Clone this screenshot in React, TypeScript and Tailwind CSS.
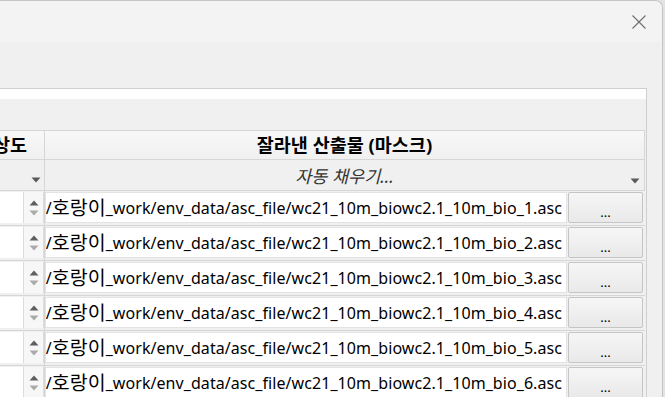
import React from "react";

const FONT = { fontFamily: '"Noto Sans", "Noto Sans CJK KR", sans-serif' };

function DownTri({ className = "" }: { className?: string }) {
  return (
    <svg width="10" height="6" viewBox="0 0 10 6" className={className}>
      <path d="M0.5 0.5 L9.5 0.5 L5 5.5 Z" fill="#5a5a5a" />
    </svg>
  );
}

function Spin() {
  return (
    <div className="flex h-full w-[44px] shrink-0">
      <div className="h-full w-[24px] bg-white border-r border-[#dcdcdc]" />
      <div className="flex h-full w-[20px] flex-col items-center justify-center gap-[4px] bg-[#f7f7f7] border-r border-[#dcdcdc]">
        <svg width="10" height="6" viewBox="0 0 10 6">
          <path d="M0.5 5.5 L9.5 5.5 L5 0.5 Z" fill="#5f5f5f" />
        </svg>
        <svg width="10" height="6" viewBox="0 0 10 6">
          <path d="M0.5 0.5 L9.5 0.5 L5 5.5 Z" fill="#ababab" />
        </svg>
      </div>
    </div>
  );
}

function DataRow({ n }: { n: number }) {
  return (
    <div className="flex h-[35px] shrink-0 border-b border-[#d6d6d6] bg-[#f0f0f0]">
      <div className="flex w-[44px] shrink-0 pt-[1px] pb-[2px]">
        <Spin />
      </div>
      <div className="w-[1px] bg-[#d6d6d6]" />
      <div className="flex flex-1 gap-[1px] pt-[1px] pb-[2px] pr-[1px]">
        <div className="flex h-full w-[522px] shrink-0 items-center justify-end overflow-hidden whitespace-nowrap border border-[#e3e3e3] bg-white pr-[4px] text-[16px] text-black">
          <span>C:/Users/user/Desktop/</span>
          <span className="text-[19.5px] leading-none">호랑이</span>
          <span className="tracking-[0.07px]">_work/env_data/asc_file/wc21_10m_biowc2.1_10m_bio_{n}.asc</span>
        </div>
        <div className="flex h-full w-[75px] shrink-0 items-center justify-center rounded-[2px] border border-[#c5c5c5] bg-gradient-to-b from-[#f6f6f6] to-[#e9e9e9] pt-[10px] text-[13px] leading-none text-black">
          ...
        </div>
      </div>
    </div>
  );
}

export default function App() {
  return (
    <div className="relative h-[397px] w-[665px] overflow-hidden bg-[#e3e3e3]" style={FONT}>
      <div className="flex h-[397px] w-[663px] flex-col overflow-hidden rounded-tr-[8px] border-t border-r border-[#c4c4c4] bg-[#f0f0f0]">
        {/* title bar */}
        <div className="flex h-[41px] shrink-0 items-center justify-end bg-[#f3f3f3] pr-[16px]">
          <svg width="14" height="14" viewBox="0 0 14 14">
            <path d="M0.5 0.5 L13.5 13.5 M13.5 0.5 L0.5 13.5" stroke="#6e6e6e" strokeWidth="1.1" />
          </svg>
        </div>
        <div className="h-[46px] shrink-0 bg-[#f0f0f0]" />
        {/* table frame */}
        <div className="flex w-[647px] flex-1 flex-col border-t border-r border-[#cfcfcf] bg-[#f0f0f0]">
          <div className="h-[10px] shrink-0 bg-white" />
          <div className="h-[31px] shrink-0 bg-[#f0f0f0]" />
          <div className="flex w-[645px] flex-col">
            {/* header */}
            <div className="flex h-[30px] shrink-0 border-t border-b border-[#d6d6d6] bg-gradient-to-b from-[#f8f8f8] to-[#f0f0f0] text-[18.5px] font-bold text-black">
              <div className="flex w-[44px] shrink-0 items-center justify-end overflow-hidden whitespace-nowrap pr-[17px]">
                해상도
              </div>
              <div className="w-[1px] bg-[#d6d6d6]" />
              <div className="flex flex-1 items-center justify-center border-r border-[#d6d6d6]">
                잘라낸 산출물 (마스크)
              </div>
            </div>
            {/* filter row */}
            <div className="flex h-[31px] shrink-0 border-b border-[#d6d6d6] bg-[#f0f0f0] text-[17.5px] italic text-[#333]">
              <div className="relative flex w-[44px] shrink-0 items-end justify-end pb-[7px] pr-[3px]">
                <DownTri />
              </div>
              <div className="w-[1px] bg-[#d6d6d6]" />
              <div className="relative flex flex-1 items-center justify-center border-r border-[#d6d6d6]">
                <span className="mt-[2px]">자동 채우기...</span>
                <div className="absolute bottom-[6px] right-[4px]">
                  <DownTri />
                </div>
              </div>
            </div>
            {[1, 2, 3, 4, 5, 6].map((n) => (
              <DataRow key={n} n={n} />
            ))}
          </div>
        </div>
      </div>
    </div>
  );
}
